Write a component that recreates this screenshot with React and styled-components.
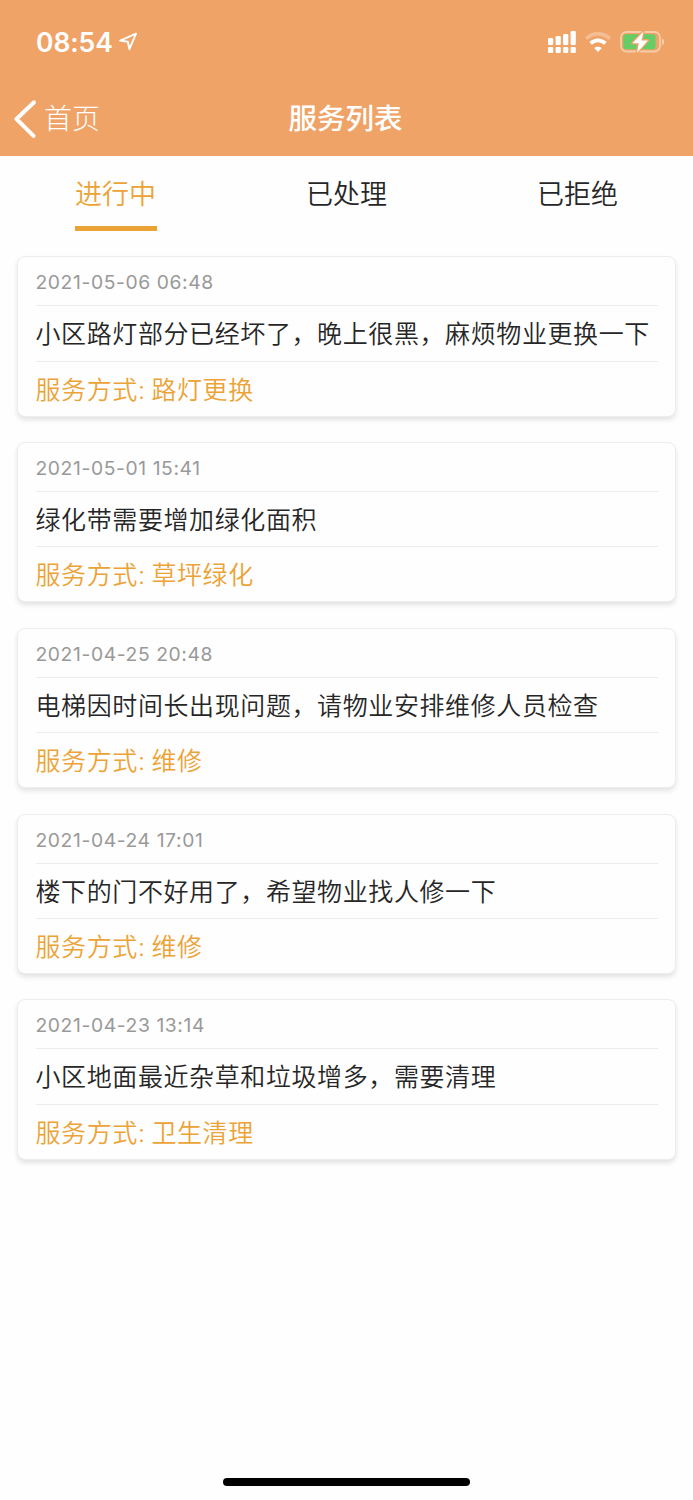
import React from "react";
import styled, { createGlobalStyle } from "styled-components";

const Global = createGlobalStyle`
  * { box-sizing: border-box; }
  body { margin: 0; background: #fefefe; }
`;

const Screen = styled.div`
  width: 693px;
  height: 1500px;
  display: flex;
  flex-direction: column;
  overflow: hidden;
  background: #fefefe;
  color: #262626;
  font-family: Inter, "Noto Sans CJK SC", sans-serif;
`;

const Header = styled.header`
  height: 155.5px;
  flex: none;
  background: #efa367;
  color: #fff;
`;

const StatusBar = styled.div`
  height: 83px;
  padding: 0 28px 0 36px;
  display: flex;
  align-items: center;
  justify-content: space-between;
`;

const StatusGroup = styled.div`
  display: flex;
  align-items: center;
`;

const Clock = styled.span`
  width: 83px;
  padding-top: 1px;
  font-size: 26.5px;
  font-weight: 600;
  line-height: 32px;
  letter-spacing: -0.1px;
`;

const NavBar = styled.div`
  height: 72px;
  padding-left: 14px;
  display: grid;
  grid-template-columns: 200px 263px 1fr;
  align-items: center;
`;

const Back = styled.div`
  display: flex;
  align-items: center;
  gap: 7px;
  font-size: 28px;
  font-weight: 300;
  line-height: 40px;
`;

const Title = styled.h1`
  margin: 0;
  text-align: center;
  font-size: 28.5px;
  font-weight: 500;
  line-height: 40px;
`;

const Tabs = styled.nav`
  flex: none;
  height: 100.8px;
  display: grid;
  grid-template-columns: repeat(3, 1fr);
  justify-items: center;
  align-items: start;
`;

const Tab = styled.div`
  height: 75.5px;
  width: 82px;
  padding-top: 19px;
  text-align: center;
  white-space: nowrap;
  font-size: 27px;
  line-height: 40px;
  font-weight: 350;
  color: ${(p) => (p.$active ? "#eca336" : "#262626")};
  border-bottom: 5px solid ${(p) => (p.$active ? "#eca336" : "transparent")};
`;

const List = styled.main`
  flex: 1;
  display: flex;
  flex-direction: column;
  gap: 25.5px;
  padding: 0 17px;
`;

const Card = styled.article`
  height: 160.3px;
  padding: 0 17.5px;
  border: 1px solid #ededed;
  border-radius: 8px;
  background: #fefefe;
  box-shadow: 0 3px 5px rgba(0, 0, 0, 0.11);
`;

const Row = styled.div`
  height: 55.3px;
  line-height: 56px;
  font-size: 25px;
  letter-spacing: 0.6px;
  font-weight: 350;
  white-space: nowrap;
`;

const DateRow = styled(Row)`
  height: 49px;
  line-height: 50px;
  font-size: 19.3px;
  letter-spacing: 0.6px;
  font-weight: 400;
  color: #999;
  border-bottom: 1.5px solid #ebebeb;
`;

const ContentRow = styled(Row)`
  border-bottom: 1.5px solid #ebebeb;
`;

const ServiceRow = styled(Row)`
  color: #eca336;
  word-spacing: -1.8px;
`;

const Bottom = styled.footer`
  height: 22px;
  flex: none;
  display: flex;
  justify-content: center;
`;

const HomeIndicator = styled.div`
  width: 247px;
  height: 8px;
  border-radius: 4px;
  background: #000;
`;

const items = [
  ["2021-05-06 06:48", "小区路灯部分已经坏了，晚上很黑，麻烦物业更换一下", "路灯更换"],
  ["2021-05-01 15:41", "绿化带需要增加绿化面积", "草坪绿化"],
  ["2021-04-25 20:48", "电梯因时间长出现问题，请物业安排维修人员检查", "维修"],
  ["2021-04-24 17:01", "楼下的门不好用了，希望物业找人修一下", "维修"],
  ["2021-04-23 13:14", "小区地面最近杂草和垃圾增多，需要清理", "卫生清理"],
];

const LocationIcon = () => (
  <svg width="19" height="19" viewBox="0 0 19 19" fill="none" stroke="#fff" strokeWidth="1.9" strokeLinejoin="round">
    <path d="M17 1.7 1.2 8.6 8.9 9.8 10.4 17.2Z" />
  </svg>
);

const SignalIcon = () => (
  <svg width="28" height="22" viewBox="0 0 28 22" fill="#fff">
    <rect x="0" y="7" width="5.2" height="7" rx="1.2" />
    <rect x="7.6" y="5" width="5.2" height="9" rx="1.2" />
    <rect x="15.1" y="3" width="5.2" height="11" rx="1.2" />
    <rect x="22.6" y="0" width="5.2" height="14" rx="1.2" />
    <rect x="0" y="16" width="5.2" height="6" rx="1.2" />
    <rect x="7.6" y="16" width="5.2" height="6" rx="1.2" />
    <rect x="15.1" y="16" width="5.2" height="6" rx="1.2" />
    <rect x="22.6" y="16" width="5.2" height="6" rx="1.2" />
  </svg>
);

const WifiIcon = () => (
  <svg width="26" height="20" viewBox="0 0 26 20" fill="none" stroke="#fff" strokeWidth="3.6">
    <path d="M1.2 6.8A16.6 16.6 0 0 1 24.8 6.8" opacity=".3" />
    <path d="M5.6 11.4A10.6 10.6 0 0 1 20.4 11.4" />
    <path d="M9.2 16.1Q13 12.7 16.8 16.1L13 19.9Z" fill="#fff" stroke="none" />
  </svg>
);

const BatteryIcon = () => (
  <svg width="45" height="24" viewBox="0 0 45 24">
    <rect x="1" y="2" width="39" height="19.5" rx="5.5" fill="none" stroke="#fff" strokeOpacity=".45" strokeWidth="1.8" />
    <path d="M42 8.5q2.2.8 2.2 3.3T42 15.2Z" fill="#fff" fillOpacity=".5" />
    <rect x="3.3" y="4.3" width="32.2" height="14.9" rx="2.5" fill="#65cd65" />
    <path d="M23.4 1.5 12.5 13.2h6.3L17 22.7 28 10.4h-6.4Z" fill="#fff" stroke="#efa367" strokeWidth="2.6" strokeLinejoin="round" paintOrder="stroke" />
  </svg>
);

const BackIcon = () => (
  <svg width="23" height="38" viewBox="0 0 23 38" fill="none" stroke="#fff" strokeWidth="4" strokeLinecap="round" strokeLinejoin="round">
    <path d="M20 2.3 2.5 19 19.5 35.8" />
  </svg>
);

const Icons = styled(StatusGroup)`
  gap: 9px;
`;

export default function App() {
  return (
    <Screen>
      <Global />
      <Header>
        <StatusBar>
          <StatusGroup>
            <Clock>08:54</Clock>
            <LocationIcon />
          </StatusGroup>
          <Icons>
            <SignalIcon />
            <WifiIcon />
            <BatteryIcon />
          </Icons>
        </StatusBar>
        <NavBar>
          <Back>
            <BackIcon />
            <span>首页</span>
          </Back>
          <Title>服务列表</Title>
        </NavBar>
      </Header>
      <Tabs>
        <Tab $active>进行中</Tab>
        <Tab>已处理</Tab>
        <Tab>已拒绝</Tab>
      </Tabs>
      <List>
        {items.map(([date, content, service]) => (
          <Card key={date}>
            <DateRow>{date}</DateRow>
            <ContentRow>{content}</ContentRow>
            <ServiceRow>服务方式: {service}</ServiceRow>
          </Card>
        ))}
      </List>
      <Bottom>
        <HomeIndicator />
      </Bottom>
    </Screen>
  );
}
